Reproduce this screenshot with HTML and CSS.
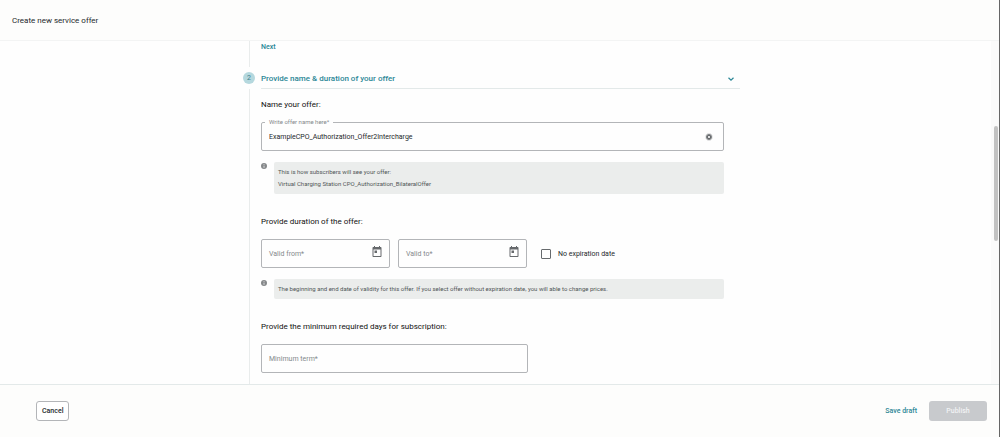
FILE: index.html
```html
<!DOCTYPE html>
<html lang="en">

<head>
    <meta charset="utf-8">
    <meta name="viewport" content="width=device-width, initial-scale=1">
    <title>Create new service offer</title>
    <link rel="stylesheet" href="styles.css">
</head>

<body>
    <header class="page-header">
        <h1 class="page-title">Create new service offer</h1>
    </header>

    <main class="page-content">
        <div class="stepper">

            <!-- end of step 1 -->
            <section class="step step-previous">
                <div class="step-rail"></div>
                <div class="step-body">
                    <button type="button" class="btn-link">Next</button>
                </div>
            </section>

            <!-- step 2 -->
            <section class="step">
                <div class="step-rail">
                    <span class="step-number">2</span>
                </div>
                <div class="step-body">
                    <button type="button" class="step-header" aria-expanded="true">
                        <span>Provide name &amp; duration of your offer</span>
                        <svg class="icon-chevron" viewBox="0 0 8 8"><path d="M1.500 2.800 4 5.200 6.500 2.800"/></svg>
                    </button>

                    <form class="offer-form">
                        <h2 class="form-title">Name your offer:</h2>
                        <div class="field field-filled">
                            <input type="text" id="offer-name" value="ExampleCPO_Authorization_Offer2Intercharge">
                            <label for="offer-name">Write offer name here*</label>
                            <button type="button" class="btn-icon" aria-label="Clear offer name">
                                <svg class="icon-clear" viewBox="0 0 8 8"><circle cx="4" cy="4" r="3.400"/><path d="M2.800 2.800 5.200 5.200M5.200 2.800 2.800 5.200"/></svg>
                            </button>
                        </div>
                        <div class="info">
                            <svg class="icon-info" viewBox="0 0 6 6"><circle cx="3" cy="3" r="3"/><path d="M3 1.200V2M3 2.600V4.800"/></svg>
                            <div class="info-text">
                                <p>This is how subscribers will see your offer:</p>
                                <p>Virtual Charging Station CPO_Authorization_BilateralOffer</p>
                            </div>
                        </div>

                        <h2 class="form-title">Provide duration of the offer:</h2>
                        <div class="field-row">
                            <div class="field">
                                <input type="text" id="valid-from">
                                <label for="valid-from">Valid from*</label>
                                <button type="button" class="btn-icon btn-calendar" aria-label="Choose start date">
                                    <svg class="icon-calendar" viewBox="2 1 20 22"><path d="M19 3h-1V1h-2v2H8V1H6v2H5c-1.100 0-2 .9-2 2v16c0 1.100.9 2 2 2h14c1.100 0 2-.9 2-2V5c0-1.100-.9-2-2-2zm0 18H5V8h14v13zM7 10h5v5H7z"/></svg>
                                </button>
                            </div>
                            <div class="field">
                                <input type="text" id="valid-to">
                                <label for="valid-to">Valid to*</label>
                                <button type="button" class="btn-icon btn-calendar" aria-label="Choose end date">
                                    <svg class="icon-calendar" viewBox="2 1 20 22"><path d="M19 3h-1V1h-2v2H8V1H6v2H5c-1.100 0-2 .9-2 2v16c0 1.100.9 2 2 2h14c1.100 0 2-.9 2-2V5c0-1.100-.9-2-2-2zm0 18H5V8h14v13zM7 10h5v5H7z"/></svg>
                                </button>
                            </div>
                            <div class="check">
                                <input type="checkbox" id="no-expiration">
                                <label for="no-expiration">No expiration date</label>
                            </div>
                        </div>
                        <div class="info">
                            <svg class="icon-info" viewBox="0 0 6 6"><circle cx="3" cy="3" r="3"/><path d="M3 1.200V2M3 2.600V4.800"/></svg>
                            <div class="info-text">
                                <p>The beginning and end date of validity for this offer. If you select offer without expiration date, you will able to change prices.</p>
                            </div>
                        </div>

                        <h2 class="form-title">Provide the minimum required days for subscription:</h2>
                        <div class="field-row">
                            <div class="field field-term">
                                <input type="text" id="minimum-term">
                                <label for="minimum-term">Minimum term*</label>
                            </div>
                        </div>
                    </form>
                </div>
            </section>
        </div>

        <div class="scrollbar">
            <div class="scrollbar-thumb"></div>
        </div>
    </main>

    <footer class="page-footer">
        <button type="button" class="btn btn-outline">Cancel</button>
        <div class="actions">
            <button type="button" class="btn-link">Save draft</button>
            <button type="button" class="btn btn-publish" disabled>Publish</button>
        </div>
    </footer>
</body>

</html>
```
FILE: styles.css
```css
:root {
    --teal: #2b8796;
    --text-color: #24282b;
    --muted-color: #84898c;
    --border-color: #b3b5b8;
    --line-color: #e3e9e9;
    --bar-color: #fdfdfc;
}

* {
    box-sizing: border-box;
}

body {
    margin: 0;
    height: 100vh;
    display: flex;
    flex-direction: column;
    border-right: 1px solid #666;
    background-color: #fefefe;
    color: var(--text-color);
    font-family: Roboto, "Liberation Sans", sans-serif;
    font-size: 7px;
}

h1, h2, p {
    margin: 0;
}

button, input {
    font: inherit;
    color: inherit;
}

button {
    padding: 0;
    border: none;
    background: none;
    cursor: pointer;
}

/* header */
.page-header {
    flex: none;
    padding: 15px 12px 13px;
    border-bottom: 1px solid #f3f4f4;
    background-color: var(--bar-color);
}

.page-title {
    font-size: 8px;
    line-height: 12px;
    font-weight: 400;
}

/* content */
.page-content {
    flex: 1;
    min-height: 0;
    display: flex;
    overflow: hidden;
}

.stepper {
    width: 100%;
    max-width: 505px;
    margin: 0 auto;
    padding-right: 8px;
}

.step {
    display: flex;
    gap: 6px;
}

.step-rail {
    flex: none;
    width: 12px;
    display: flex;
    flex-direction: column;
    align-items: center;
    gap: 5px;
}

.step-rail::after {
    content: "";
    flex: 1;
    width: 1px;
    background-color: #e9ecec;
}

.step-previous {
    height: 26px;
}

.step-previous .step-body {
    padding-top: 1px;
}

.step-body {
    flex: 1;
    min-width: 0;
}

.step-number {
    width: 12px;
    height: 12px;
    margin-top: 5px;
    border-radius: 50%;
    background-color: #b5d8de;
    color: #3d7f8c;
    line-height: 12px;
    text-align: center;
}

.step-header {
    width: 100%;
    height: 22px;
    padding: 2px 5px 0 0;
    display: flex;
    align-items: center;
    justify-content: space-between;
    border-bottom: 1px solid var(--line-color);
    color: var(--teal);
    font-size: 8px;
    font-weight: 500;
}

.offer-form {
    padding: 9px 16px 24px 0;
}

.form-title {
    margin-bottom: 10px;
    font-size: 8px;
    line-height: 14px;
    font-weight: 400;
    color: #111;
}

/* fields */
.field {
    position: relative;
    width: 129px;
    height: 29px;
    padding: 0 7px;
    display: flex;
    align-items: center;
    border: 1px solid var(--border-color);
    border-radius: 2px;
}

.field input {
    flex: 1;
    min-width: 0;
    padding: 0;
    border: none;
    outline: none;
    background: none;
}

.field label {
    position: absolute;
    left: 7px;
    color: var(--muted-color);
}

.field-filled {
    width: 100%;
    padding-right: 10px;
}

.field-filled label {
    top: -5px;
    left: 3px;
    padding: 0 4px;
    background-color: #fefefe;
    font-size: 6px;
    line-height: 8px;
}

.field-term {
    width: 267px;
}

.field-row {
    display: flex;
    gap: 8px;
}

.check {
    margin-left: 6px;
    display: flex;
    align-items: center;
    gap: 7px;
}

.check input {
    appearance: none;
    width: 10px;
    height: 10px;
    margin: 0;
    border: 1px solid #666a6d;
    border-radius: 1px;
}

/* info boxes */
.info {
    margin: 11px 0 21px;
    display: flex;
    align-items: flex-start;
    gap: 7px;
}

.info-text {
    flex: 1;
    padding: 4px;
    border-radius: 2px;
    background-color: #ebedec;
    color: #505557;
    font-size: 6px;
    line-height: 12px;
}

/* icons */
svg {
    flex: none;
    display: block;
}

.icon-chevron {
    width: 8px;
    height: 8px;
    fill: none;
    stroke: var(--teal);
    stroke-width: 1.2;
}

.icon-clear {
    width: 8px;
    height: 8px;
    fill: #66696c;
    stroke: #fefefe;
    stroke-width: 0.8;
}

.icon-info {
    width: 6px;
    height: 6px;
    margin-top: 1px;
    fill: #85888a;
    stroke: #fefefe;
    stroke-width: 0.7;
}

.icon-info circle {
    stroke: none;
}

.icon-calendar {
    width: 10px;
    height: 11px;
    fill: #66696c;
}

.btn-calendar {
    padding-bottom: 4px;
}

/* scrollbar */
.scrollbar {
    flex: none;
    width: 8px;
    padding: 85px 1px 0 3px;
    background-color: #fafafa;
}

.scrollbar-thumb {
    height: 115px;
    border-radius: 2px;
    background-color: #c2c2c2;
}

/* footer */
.page-footer {
    flex: none;
    padding: 16px 12px 16px 36px;
    display: flex;
    align-items: center;
    justify-content: space-between;
    border-top: 1px solid var(--line-color);
    background-color: var(--bar-color);
}

.actions {
    display: flex;
    align-items: center;
    gap: 12px;
}

.btn {
    height: 20px;
    padding: 0 5px;
    border-radius: 3px;
    font-weight: 500;
}

.btn-outline {
    border: 1px solid var(--border-color);
    background-color: #fff;
}

.btn-publish {
    min-width: 58px;
    background-color: #c8cacd;
    color: #f2f3f4;
    cursor: default;
}

.btn-link {
    color: var(--teal);
    line-height: 10px;
    font-weight: 500;
}
```
